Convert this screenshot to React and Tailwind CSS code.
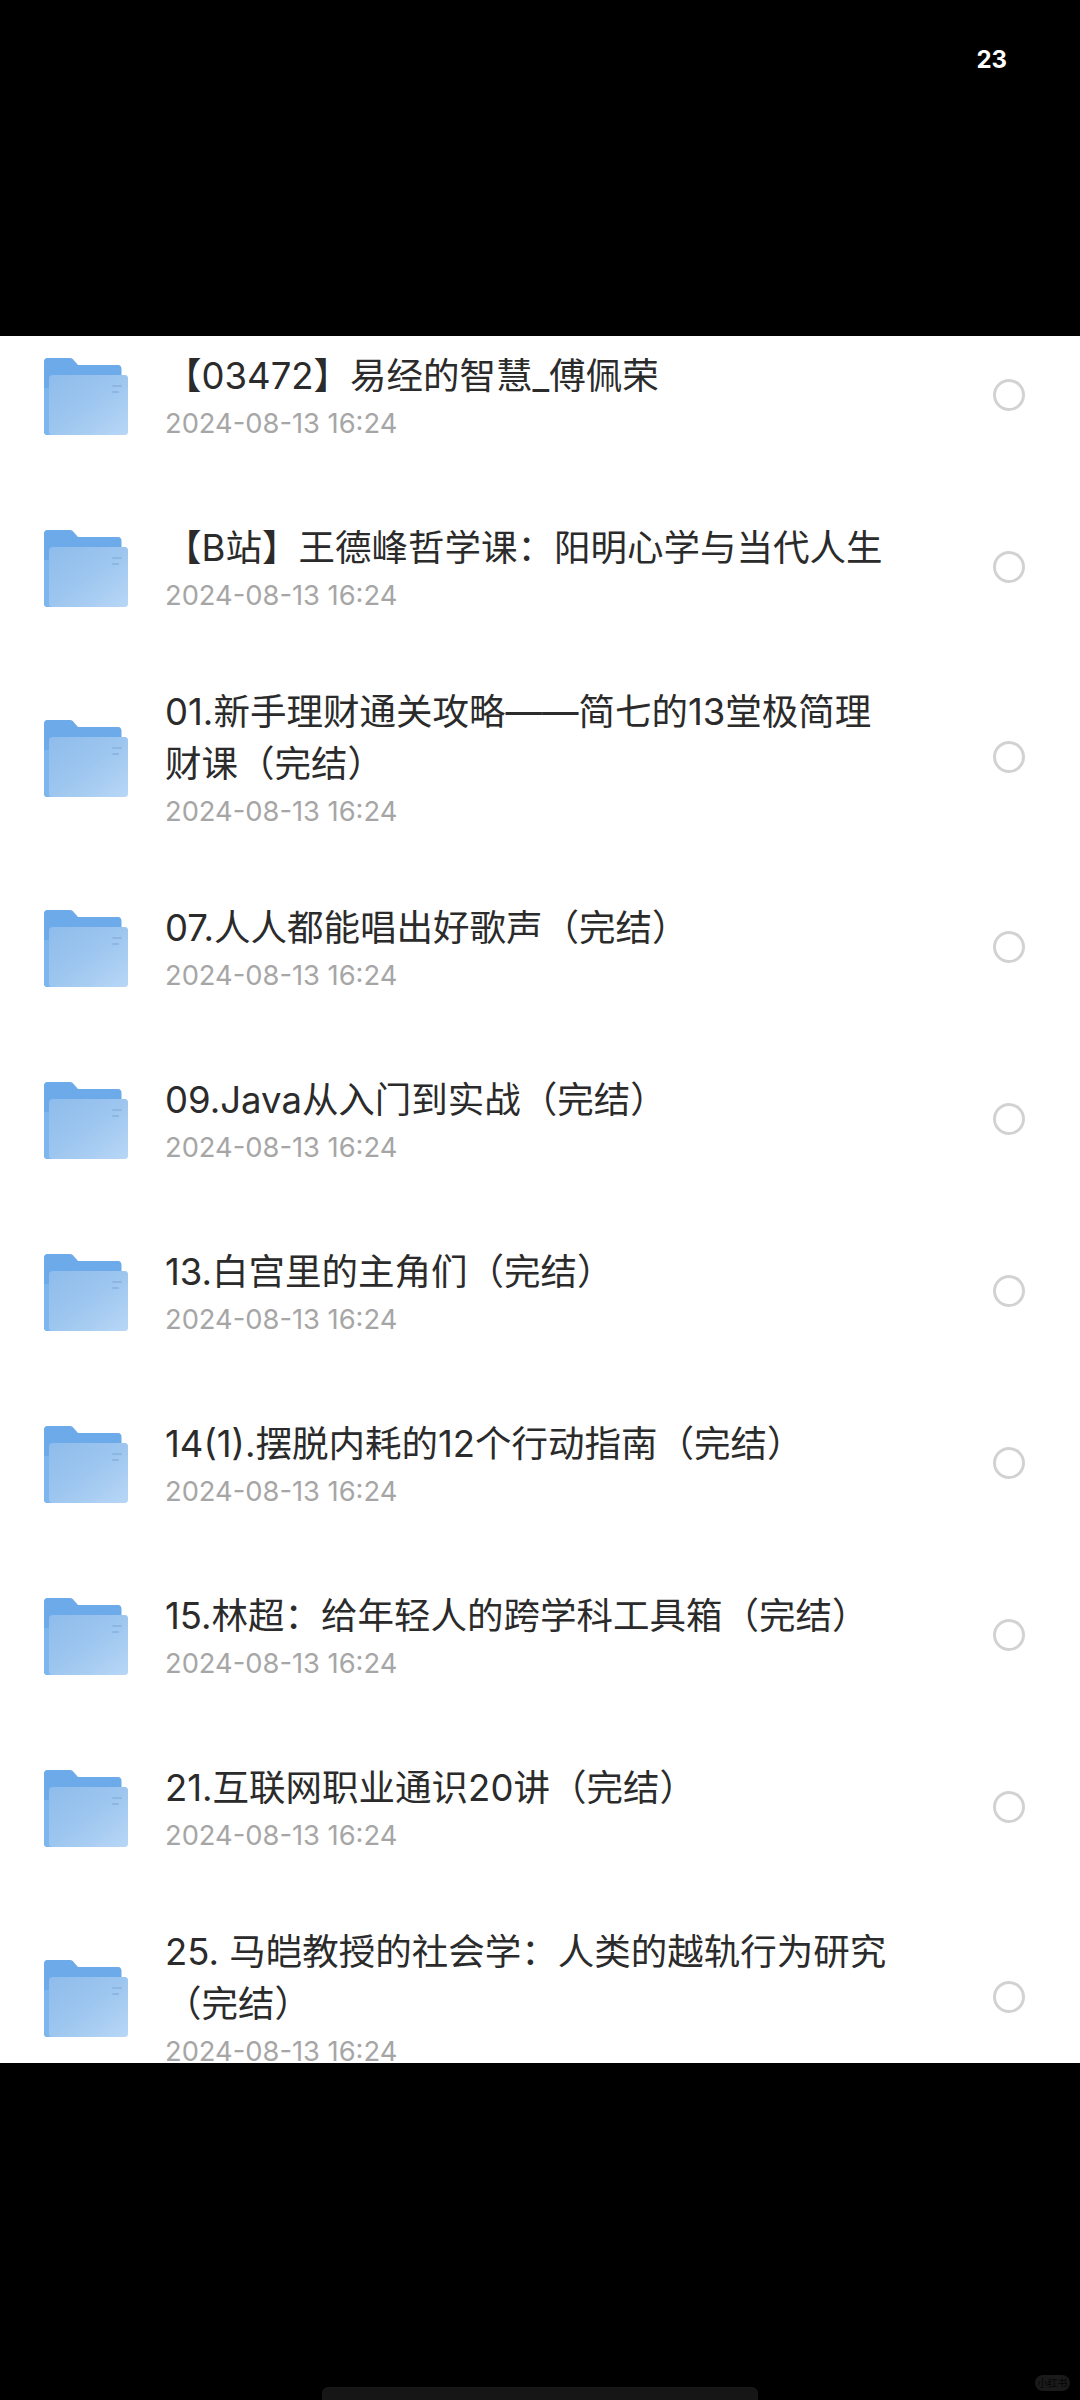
const rows = [
  { title: "【03472】易经的智慧_傅佩荣" },
  { title: "【B站】王德峰哲学课：阳明心学与当代人生" },
  { title: "01.新手理财通关攻略——简七的13堂极简理财课（完结）" },
  { title: "07.人人都能唱出好歌声（完结）" },
  { title: "09.Java从入门到实战（完结）" },
  { title: "13.白宫里的主角们（完结）" },
  { title: "14(1).摆脱内耗的12个行动指南（完结）" },
  { title: "15.林超：给年轻人的跨学科工具箱（完结）" },
  { title: "21.互联网职业通识20讲（完结）" },
  { title: "25. 马皑教授的社会学：人类的越轨行为研究（完结）" },
];

const FolderIcon = ({ id }) => (
  <svg width="84" height="78" viewBox="0 0 84 78" className="mt-[3px] shrink-0">
    <defs>
      <linearGradient id={id} x1="0" y1="0" x2="1" y2="1">
        <stop offset="0" stopColor="#8fbcec" />
        <stop offset="0.5" stopColor="#9dc6ef" />
        <stop offset="1" stopColor="#b8d7f6" />
      </linearGradient>
    </defs>
    <path
      d="M3 0H26C28 0 29 1 30 2.500L34 7H74C76.500 7 77.500 9 77.500 11V30H8V77H3C1.500 77 0 75.500 0 74V3C0 1.500 1.500 0 3 0Z"
      fill="#6caaea"
    />
    <path d="M2 30H8V77H3C1.500 77 0 75.500 0 74V30Z" fill="#7db5ee" />
    <path
      d="M9 17H81C83 17 84 18.500 84 20V74C84 76 82.500 77 81 77H9C6.500 77 5 76 5 74V20C5 18 7 17 9 17Z"
      fill={`url(#${id})`}
    />
    <rect x="68" y="27" width="10" height="2" rx="1" fill="#8db6e3" />
    <rect x="68" y="33" width="7" height="2" rx="1" fill="#8db6e3" />
  </svg>
);

const Row = ({ title, index }) => (
  <div className="flex min-h-[172px] items-center pl-[44px] pr-[55px]">
    <FolderIcon id={`folder-${index}`} />
    <div className="ml-[37px] w-[735px] pt-[33px] pb-[27px]">
      <div className="text-[36.5px] leading-[52px] text-[#2b2b2b]">{title}</div>
      <div className="text-[27.3px] leading-[44px] text-[#a6a6a6]">2024-08-13 16:24</div>
    </div>
    <div className="ml-auto size-8 shrink-0 rounded-full border-[3px] border-[#d2d2d2]" />
  </div>
);

export default function App() {
  return (
    <div
      className="relative flex h-[2400px] w-[1080px] flex-col overflow-hidden bg-black"
      style={{ fontFamily: 'Inter, "Noto Sans CJK SC", sans-serif' }}
    >
      <div className="flex h-[336px] shrink-0 justify-end pt-[44px] pr-[73px]">
        <span className="text-[24px] leading-8 font-bold text-white">23</span>
      </div>
      <div className="h-[1727px] shrink-0 overflow-hidden bg-white">
        <div className="-mt-[27px]">
          {rows.map((row, i) => (
            <Row key={i} index={i} title={row.title} />
          ))}
        </div>
      </div>
      <div className="flex flex-1 items-end justify-center">
        <div className="h-[13px] w-[436px] rounded-t-md bg-[#161616]" />
      </div>
      <div className="absolute top-[2375px] left-[1035px] flex h-[16px] w-[35px] items-center justify-center rounded-full bg-[#1a1a1a] text-[10px] leading-none text-[#050505]">
        小红书
      </div>
    </div>
  );
}
